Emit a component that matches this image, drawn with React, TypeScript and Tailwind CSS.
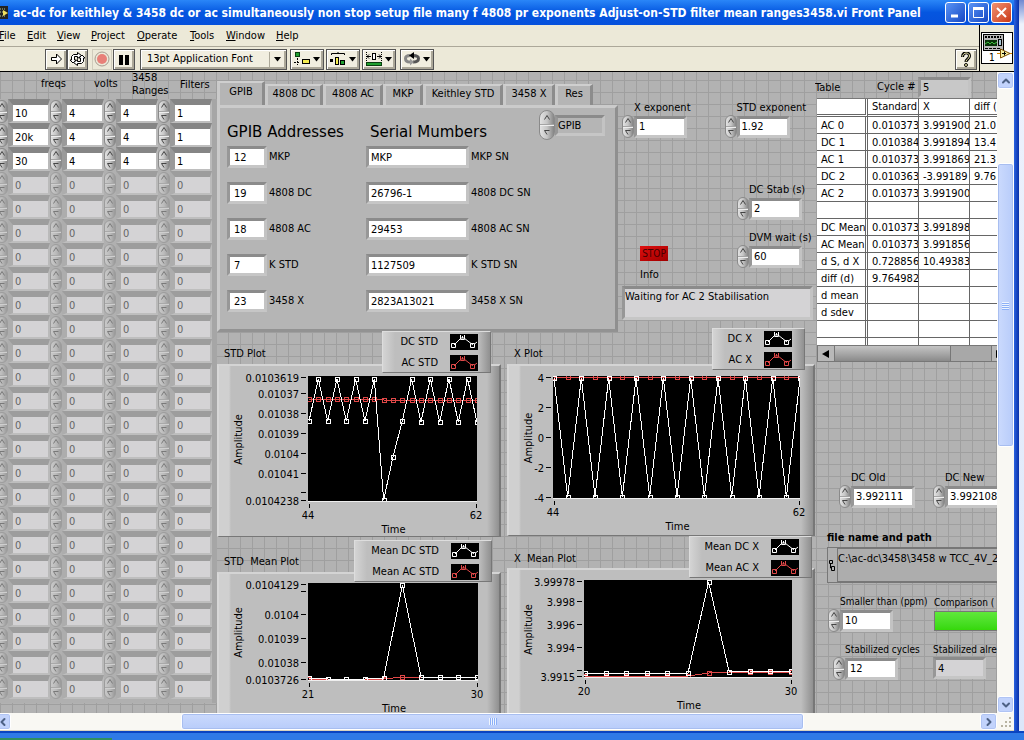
import { useState } from "react";
import clsx from "clsx";
import { ChevronDown, ChevronLeft, ChevronRight, ChevronUp } from "lucide-react";

const TITLE =
  "ac-dc for keithley & 3458 dc or ac simultaneously non stop setup file many f 4808 pr exponents Adjust-on-STD filter mean ranges3458.vi Front Panel";

const MENUS = [
  { name: "File", width: "w-[28px]" },
  { name: "Edit", width: "w-[30px]" },
  { name: "View", width: "w-[34px]" },
  { name: "Project", width: "w-[46px]" },
  { name: "Operate", width: "w-[53px]" },
  { name: "Tools", width: "w-[36px]" },
  { name: "Window", width: "w-[50px]" },
  { name: "Help", width: "w-[30px]" },
];

const TABS = [
  { name: "GPIB", width: "w-[48px]" },
  { name: "4808 DC", width: "w-[58px]" },
  { name: "4808 AC", width: "w-[60px]" },
  { name: "MKP", width: "w-[40px]" },
  { name: "Keithley STD", width: "w-[80px]" },
  { name: "3458 X", width: "w-[52px]" },
  { name: "Res", width: "w-[38px]" },
];

const DEVICES = [
  { name: "MKP", address: "12", serial: "MKP" },
  { name: "4808 DC", address: "19", serial: "26796-1" },
  { name: "4808 AC", address: "18", serial: "29453" },
  { name: "K STD", address: "7", serial: "1127509" },
  { name: "3458 X", address: "23", serial: "2823A13021" },
];

const ARRAY_COLUMNS = ["freqs", "volts", "3458 Ranges", "Filters"];

const ARRAY_ROWS: string[][] = [
  ["10", "4", "4", "1"],
  ["20k", "4", "4", "1"],
  ["30", "4", "4", "1"],
  ...Array.from({ length: 22 }, () => ["0", "0", "0", "0"]),
];

const TABLE_ROWS = [
  ["AC 0", "0.010373", "3.991900", "21.0"],
  ["DC 1", "0.010384", "3.991894", "13.4"],
  ["AC 1", "0.010373", "3.991869", "21.3"],
  ["DC 2", "0.010363", "-3.99189", "9.76"],
  ["AC 2", "0.010373", "3.991900", ""],
  ["", "", "", ""],
  ["DC Mean", "0.010373", "3.991898", ""],
  ["AC Mean", "0.010373", "3.991856", ""],
  ["d S, d X", "0.728856", "10.49383", ""],
  ["diff (d)", "9.764982", "", ""],
  ["d mean", "", "", ""],
  ["d sdev", "", "", ""],
  ["", "", "", ""],
  ["", "", "", ""],
];

/* ---------- small controls ---------- */

function Spinner({ label, dim, large }: { label: string; dim?: boolean; large?: boolean }) {
  return (
    <span
      className={clsx(
        "flex shrink-0 flex-col items-center overflow-hidden rounded-full border border-[#8a8a8a] bg-linear-to-r from-[#e2e2e2] via-[#c6c6c6] to-[#858585]",
        large ? "h-[30px] w-4" : "h-[23px] w-3",
        dim && "opacity-50"
      )}
    >
      <button aria-label={`Increase ${label}`} className="flex w-full flex-1 items-center justify-center border-b border-[#a4a4a4]">
        <svg width="6" height="5" viewBox="0 0 6 5">
          <path d="M0.5 4.5L3 0.5L5.5 4.5" fill="none" stroke="#444" />
        </svg>
      </button>
      <button aria-label={`Decrease ${label}`} className="flex w-full flex-1 items-center justify-center border-t border-[#eee]">
        <svg width="6" height="5" viewBox="0 0 6 5">
          <path d="M5.5 0.5H0.5L3 4.5" fill="none" stroke="#444" />
        </svg>
      </button>
    </span>
  );
}

const sunken = "border-3 border-t-[#8b8b8b] border-l-[#979797] border-r-[#c3c3c3] border-b-[#c6c6c6]";

interface NumericProps {
  id: string;
  label: string;
  value: string;
  width?: string;
  indicator?: boolean;
  small?: boolean;
}

function Numeric({ id, label, value, width = "w-[53px]", indicator, small }: NumericProps) {
  return (
    <div className="flex flex-col">
      <label
        htmlFor={id}
        className={clsx("h-[14px] leading-[14px] whitespace-nowrap", !indicator && "pl-3", small && "text-[10px]")}
      >
        {label}
      </label>
      <div className="flex items-center">
        {!indicator && <Spinner label={label} />}
        <input
          id={id}
          defaultValue={value}
          readOnly={indicator}
          className={clsx(sunken, width, "h-[22px] pl-0.5 outline-none", indicator ? "bg-[#d4d3d5]" : "bg-white")}
        />
      </div>
    </div>
  );
}

/* ---------- title bar, menus, toolbar ---------- */

function TitleBar() {
  const frame = "flex size-[21px] items-center justify-center rounded-[3px] border border-white";
  return (
    <header className="flex h-[25px] shrink-0 items-center overflow-hidden bg-linear-to-b from-[#2a86f8] via-[#0556e0] to-[#0650dc]">
      <svg width="9" height="14" viewBox="0 0 9 14" className="shrink-0">
        <rect width="8" height="13" fill="#222" />
        <path d="M0 3H6M0 6H3M0 10H5" stroke="#b8c890" strokeDasharray="1 1" />
        <path d="M3 4L8 7L3 10Z" fill="#f0e060" />
      </svg>
      <h1 className="min-w-0 flex-1 overflow-hidden pl-1 text-[12px] font-bold whitespace-nowrap text-white">
        {TITLE}
      </h1>
      <div className="flex shrink-0 gap-0.5 pr-0.5">
        <button aria-label="Minimize" className={clsx(frame, "bg-linear-to-br from-[#5a93f5] to-[#1747c4]")}>
          <svg width="13" height="13"><path d="M2 10H9" stroke="white" strokeWidth="3" /></svg>
        </button>
        <button aria-label="Maximize" className={clsx(frame, "bg-linear-to-br from-[#5a93f5] to-[#1747c4]")}>
          <svg width="13" height="13">
            <path d="M1.5 2V11.5H11.5V2" fill="none" stroke="white" />
            <path d="M1 2.5H12" stroke="white" strokeWidth="3" />
          </svg>
        </button>
        <button aria-label="Close" className={clsx(frame, "bg-linear-to-br from-[#f09070] to-[#c83410]")}>
          <svg width="13" height="13"><path d="M2 2L11 11M11 2L2 11" stroke="white" strokeWidth="2" /></svg>
        </button>
      </div>
    </header>
  );
}

const toolButton =
  "flex h-[21px] items-center justify-center border border-[#555] bg-[#f1eee0] shadow-[inset_1px_1px_0_#fff,inset_-2px_-2px_0_#aca899]";

function DropArrow() {
  return (
    <svg width="9" height="5" viewBox="0 0 9 5" className="shrink-0">
      <path d="M1 0H8L4.5 4.5Z" fill="black" />
    </svg>
  );
}

function Toolbar() {
  return (
    <div className="flex h-[25px] items-center border-t border-[#aca899] pl-[45px]">
      <button aria-label="Run" className={clsx(toolButton, "w-[22px]")}>
        <svg width="13" height="12" viewBox="0 0 13 12">
          <path d="M1.5 4.5H6.5V1L11.5 6L6.5 11V7.5H1.5Z" fill="white" stroke="black" />
        </svg>
      </button>
      <button aria-label="Run continuously" className={clsx(toolButton, "w-[21px]")}>
        <svg width="17" height="14" viewBox="0 0 17 14">
          <path
            d="M2.500 8V4.500L4.500 2.500H8.500V0.500L12.500 3.500L8.500 6.500V4.500H5.500V8L7 8L4 11L1 8Z"
            fill="white"
            stroke="black"
          />
          <path
            d="M14.500 6V9.500L12.500 11.500H8.500V13.500L4.500 10.500L8.500 7.500V9.500H11.500V6L10 6L13 3L16 6Z"
            fill="white"
            stroke="black"
          />
        </svg>
      </button>
      <button aria-label="Abort" className="ml-1 flex h-[21px] w-[20px] items-center justify-center border border-[#d0ccbc]">
        <svg width="16" height="16" viewBox="0 0 16 16">
          <circle cx="8" cy="8" r="7" fill="none" stroke="#a89c90" />
          <circle cx="8" cy="8" r="5" fill="#e88078" />
        </svg>
      </button>
      <button aria-label="Pause" className={clsx(toolButton, "ml-px w-[22px]")}>
        <svg width="11" height="11" viewBox="0 0 11 11"><path d="M0 1H4V11H0ZM6 1H10V11H6Z" /></svg>
      </button>
      <div className="relative ml-[5px]">
        <select aria-label="Font" className={clsx(toolButton, "w-[147px] appearance-none pl-1.5 outline-none")}>
          <option>13pt Application Font</option>
        </select>
        <span className="pointer-events-none absolute inset-y-[3px] right-[3px] flex w-[15px] items-center justify-center border-l border-[#aca899]">
          <DropArrow />
        </span>
      </div>
      <button aria-label="Align objects" className={clsx(toolButton, "ml-[3px] w-[34px] gap-0.5")}>
        <svg width="16" height="14" viewBox="0 0 16 14">
          <rect x="1.500" y="0.500" width="4" height="4" fill="#20a030" stroke="#0a4010" />
          <path d="M3.500 6V13" stroke="black" strokeDasharray="2 1" />
          <path d="M0 10.500H6" stroke="black" strokeDasharray="2 1" />
          <rect x="8.500" y="7.500" width="7" height="4" fill="#f4ec50" stroke="black" />
        </svg>
        <DropArrow />
      </button>
      <button aria-label="Distribute objects" className={clsx(toolButton, "ml-0.5 w-[34px] gap-0.5")}>
        <svg width="16" height="14" viewBox="0 0 16 14">
          <path d="M1.500 3V1.500H14.500V3M8 1V0" fill="none" stroke="black" />
          <path d="M0 7H3V10H0Z" fill="black" />
          <rect x="5.500" y="5.500" width="3" height="7" fill="#f4ec50" stroke="black" />
          <rect x="10.500" y="8.500" width="4" height="4" fill="#20a030" stroke="black" />
        </svg>
        <DropArrow />
      </button>
      <button aria-label="Resize objects" className={clsx(toolButton, "ml-0.5 w-[34px] gap-0.5")}>
        <svg width="16" height="14" viewBox="0 0 16 14">
          <path d="M0.500 0V9M15.500 0V9" stroke="black" strokeDasharray="1 1" />
          <path d="M1 4.500H5M3 2.500L1 4.500L3 6.500M15 4.500H11M13 2.500L15 4.500L13 6.500" fill="none" stroke="black" />
          <rect x="6.500" y="1.500" width="3" height="6" fill="#fff" stroke="black" />
          <rect x="0.500" y="10.500" width="15" height="3" fill="#20a030" stroke="#0a4010" />
        </svg>
        <DropArrow />
      </button>
      <button aria-label="Reorder" className={clsx(toolButton, "ml-1 w-[34px] gap-0.5")}>
        <svg width="16" height="14" viewBox="0 0 16 14">
          <path d="M9 10C14 10 14.500 8 14.500 6.500C14.500 4 12 3.500 9 3.500" fill="none" stroke="#555" strokeWidth="3" />
          <path d="M6 3.500C2 3.500 1.500 5 1.500 6.500C1.500 9 3 10 6 10" fill="none" stroke="#888" strokeWidth="3" />
          <path d="M10 0V7L5 3.500Z" fill="black" />
          <path d="M6 6.500V13.500L10 10Z" fill="#999" />
        </svg>
        <DropArrow />
      </button>
      <button aria-label="Help" className={clsx(toolButton, "mr-0.5 ml-auto w-[22px]")}>
        <svg width="12" height="15" viewBox="0 0 12 15">
          <path d="M2.500 5C2.500 -0.500 9.500 -0.500 9.500 4C9.500 7 6 7 6 10" fill="none" stroke="black" strokeWidth="3" />
          <path d="M2.500 4.500C3 0 9.500 0 9.500 4C9.500 7 6 7 6 9.500" fill="none" stroke="#f4f0b0" />
          <circle cx="6" cy="13" r="1.500" fill="#f4f0b0" stroke="black" />
        </svg>
      </button>
    </div>
  );
}

function ViIcon() {
  return (
    <svg width="32" height="32" viewBox="0 0 32 32">
      <rect x="0.500" y="0.500" width="31" height="31" fill="white" stroke="black" />
      <rect x="2.500" y="2.500" width="20" height="16" fill="#b8b8b8" stroke="black" />
      <path d="M4 5H20" stroke="black" strokeWidth="2" strokeDasharray="2 1" />
      <rect x="4" y="8" width="12" height="6" fill="#083008" />
      <path d="M4 12L7 10L9 12L11 10L13 12L16 10" fill="none" stroke="#40c040" />
      <rect x="17.500" y="7.500" width="3" height="6" fill="#a8c8d8" stroke="black" />
      <path d="M4 16.500H19" stroke="black" strokeDasharray="3 1" />
      <path d="M16 21.500H20M28 21.500H31" stroke="#d08000" />
      <path d="M19.500 17V26L29 21.500Z" fill="#f8f0a0" stroke="#805000" />
      <path d="M21 21.500H25M23.500 19.500V23.500" stroke="black" />
      <text x="8" y="29" fontSize="10">1</text>
    </svg>
  );
}

/* ---------- left hand array ---------- */

function SetupArray() {
  return (
    <section className="w-[217px] shrink-0 overflow-hidden">
      <div className="flex h-[27px] w-[217px] items-end pb-0.5 leading-[13px]">
        <span className="w-[94px] pb-[7px] pl-[41px]">freqs</span>
        <span className="w-[38px] pb-[7px]">volts</span>
        <span className="w-[48px]">3458 Ranges</span>
        <span className="pb-1.5">Filters</span>
      </div>
      <div className="-ml-1 grid w-[221px] grid-cols-[repeat(4,54px)] border-r-5 border-[#a6a6a6] bg-[#b0b0b0] pb-1">
        {ARRAY_ROWS.map((row, r) =>
          row.map((value, c) => {
            const on = r < 3;
            return (
              <div key={`${r}-${c}`} className="flex h-6 items-end">
                <Spinner label={`${ARRAY_COLUMNS[c]} ${r}`} dim={!on} />
                <input
                  aria-label={`${ARRAY_COLUMNS[c]} ${r}`}
                  defaultValue={value}
                  className={clsx(
                    "h-6 w-[42px] border-t-6 border-r-2 border-b-2 border-l-5 border-r-[#bababa] border-b-[#bebebe] pl-0.5 outline-none",
                    on
                      ? "border-t-[#858585] border-l-[#9a9a9a] bg-white"
                      : "border-t-[#9d9d9d] border-l-[#adadad] bg-[#d4d3d5] text-[#666]"
                  )}
                />
              </div>
            );
          })
        )}
      </div>
    </section>
  );
}

/* ---------- tab control ---------- */

function GpibTabs() {
  const [active, setActive] = useState(0);
  return (
    <div className="w-[401px] shrink-0 pt-[9px]">
      <div role="tablist" className="flex h-6 items-end">
        {TABS.map((tab, i) => (
          <button
            key={tab.name}
            role="tab"
            aria-selected={i === active}
            onClick={() => setActive(i)}
            className={clsx(
              tab.width,
              "shrink-0 border-t-2 border-r-3 border-l-3 border-t-[#cfcfcf] border-r-[#8c8c8c] border-l-[#cacaca] bg-[#b5b5b5] whitespace-nowrap",
              i === active ? "h-6 pb-1" : "h-[21px] pb-[3px]"
            )}
          >
            {tab.name}
          </button>
        ))}
      </div>
      <div
        role="tabpanel"
        className="h-[227px] border-3 border-t-[#cbcbcb] border-r-[#8f8f8f] border-b-[#929292] border-l-[#cbcbcb] bg-[#b5b5b5] pl-[7px]"
      >
        <div className="flex h-[31px] items-start font-['DejaVu_Sans'] text-[15px]">
          <h2 className="w-[143px] pt-[14px] leading-5">GPIB Addresses</h2>
          <h2 className="pt-[14px] leading-5">Serial Mumbers</h2>
          <div className="mt-0.5 mr-2.5 ml-auto flex items-center font-['DejaVu_Sans_Condensed'] text-[11px]">
            <Spinner label="page" large />
            <output className={clsx(sunken, "h-[21px] w-[50px] bg-[#b5b5b5] leading-4")}>GPIB</output>
          </div>
        </div>
        {DEVICES.map((d, i) => (
          <div key={d.name} className="flex h-9 items-center">
            <div className="flex w-[139px] items-center gap-0.5">
              <input id={`addr-${i}`} defaultValue={d.address} className={clsx(sunken, "h-[22px] w-10 bg-white pl-1 outline-none")} />
              <label htmlFor={`addr-${i}`}>{d.name}</label>
            </div>
            <div className="flex items-center gap-0.5">
              <input id={`sn-${i}`} defaultValue={d.serial} className={clsx(sunken, "h-[22px] w-[103px] bg-white pl-0.5 outline-none")} />
              <label htmlFor={`sn-${i}`}>{d.name} SN</label>
            </div>
          </div>
        ))}
      </div>
    </div>
  );
}

function RunControls() {
  return (
    <div className="flex min-w-0 flex-1 flex-col pt-[29px]">
      <div className="flex h-[82px] gap-[34px] pl-1">
        <Numeric id="x-exp" label="X exponent" value="1" />
        <Numeric id="std-exp" label="STD exponent" value="1.92" />
      </div>
      <div className="h-12 pl-[119px]">
        <Numeric id="dc-stab" label="DC Stab (s)" value="2" />
      </div>
      <div className="flex h-[55px]">
        <div className="w-[119px] shrink-0 pt-[15px] pl-[22px]">
          <button className="block h-[15px] w-[28px] bg-linear-to-br from-[#e01010] to-[#a00000] text-center text-[10px] leading-[14px] text-[#400]">
            STOP
          </button>
          <label htmlFor="info" className="block pt-[7px]">Info</label>
        </div>
        <Numeric id="dvm-wait" label="DVM wait (s)" value="60" />
      </div>
      <textarea
        id="info"
        readOnly
        defaultValue="Waiting for AC 2 Stabilisation"
        className={clsx(sunken, "mr-0.5 ml-1 block h-[34px] resize-none overflow-hidden bg-[#d4d3d5] pt-px outline-none")}
      />
    </div>
  );
}

/* ---------- plots ---------- */

type Point = [number, number];

interface PlotProps {
  title: string;
  legend: string[];
  header: string;
  legendClass: string;
  panelHeight: number;
  area: { x: number; y: number; w: number; h: number };
  ticks: [number, string][];
  range: [string, string];
  dc: Point[];
  ac: Point[];
}

function LegendKey({ color }: { color: string }) {
  return (
    <svg width="28" height="16" viewBox="0 0 28 16">
      <rect width="28" height="16" fill="black" />
      <path d="M4 11L11 4H14L23 11" fill="none" stroke={color} />
      <path d="M1.500 9.500H5.500V13.500H1.500ZM10.500 1V5.500H14.500V1M12.500 2V4M20.500 9.500H24.500V13.500H20.500ZM24.500 10L27 8" fill="none" stroke={color} />
    </svg>
  );
}

function Series({ points, color }: { points: Point[]; color: string }) {
  return (
    <g fill="none" stroke={color} shapeRendering="crispEdges">
      <polyline points={points.map((p) => p.join(",")).join(" ")} />
      {points.map(([x, y]) => (
        <rect key={x} x={Math.round(x) - 2} y={Math.round(y) - 2} width="4" height="4" />
      ))}
    </g>
  );
}

function Plot({ title, legend, header, legendClass, panelHeight, area, ticks, range, dc, ac }: PlotProps) {
  const clip = title.replace(/\s+/g, "-");
  const bottom = area.y + area.h;
  return (
    <figure className="relative">
      <figcaption className={clsx("pl-[7px] whitespace-pre", header)}>{title}</figcaption>
      <div className="overflow-hidden border-t-2 border-r-2 border-b border-l-2 border-t-[#d4d4d4] border-r-[#777] border-b-[#777] border-l-[#d8d8d8] bg-[linear-gradient(to_right,#d0d0d0_10px,#bebebe_12px,#bebebe_calc(100%-12px),#909090)]">
        <svg width="100%" height={panelHeight - 3} className="block overflow-visible text-[11px]">
          <g transform="translate(-2 -2)">
            <clipPath id={clip}>
              <rect x={area.x} y={area.y} width={area.w} height={area.h} />
            </clipPath>
            <rect x={area.x} y={area.y} width={area.w} height={area.h} fill="black" />
            <g clipPath={`url(#${clip})`}>
              <Series points={ac} color="#e04848" />
              <Series points={dc} color="white" />
            </g>
            <path d={`M${area.x} ${bottom + 0.5}H${area.x + area.w}`} stroke="#eee" />
            {ticks.map(([y, text]) => (
              <g key={y}>
                <path d={`M${area.x - 7} ${y + 0.5}h5`} stroke="black" />
                <text x={area.x - 9} y={y + 5} textAnchor="end">{text}</text>
              </g>
            ))}
            <path d={`M${area.x + 1.5} ${bottom + 3}v4M${area.x + area.w - 0.5} ${bottom + 3}v4`} stroke="black" />
            <text x={area.x} y={bottom + 18} textAnchor="middle">{range[0]}</text>
            <text x={area.x + area.w - 1} y={bottom + 18} textAnchor="middle">{range[1]}</text>
            <text x={area.x + area.w / 2 + 1} y={bottom + 32} textAnchor="middle">Time</text>
            <text transform={`translate(25 ${area.y + area.h / 2 + 1}) rotate(-90)`} textAnchor="middle">Amplitude</text>
          </g>
        </svg>
      </div>
      <div
        className={clsx(
          "absolute flex h-[42px] flex-col justify-center gap-[5px] border border-t-[#ddd] border-r-[#777] border-b-[#777] border-l-[#ddd] bg-[linear-gradient(to_right,#d4d4d4,#bebebe_12px,#bebebe_calc(100%-12px),#909090)] pr-3",
          legendClass
        )}
      >
        {legend.map((name, i) => (
          <div key={name} className="flex h-4 items-center justify-end gap-3 whitespace-nowrap">
            {name}
            <LegendKey color={i === 0 ? "white" : "#e04848"} />
          </div>
        ))}
      </div>
    </figure>
  );
}

const spread = (x0: number, step: number, ys: number[]): Point[] => ys.map((y, i) => [x0 + i * step, y]);

const stdDc = spread(92, 9.33, [57, 15, 57, 15, 57, 15, 57, 15, 136, 93, 57, 15, 58, 15, 58, 15, 58, 15, 58]);
const stdAc = spread(92, 9.33, Array.from({ length: 19 }, (_, i) => (i < 8 ? 35 : 36)));
const xDc = spread(47, 13.67, Array.from({ length: 19 }, (_, i) => (i % 2 ? 133 : 14)));
const xAc = spread(47, 13.67, Array.from({ length: 19 }, () => 13));
const stdMeanDc = spread(92, 18.67, [106, 107, 107, 107, 106, 13, 105, 105, 105, 105]);
const stdMeanAc = spread(92, 18.67, [107, 107, 107, 107, 107, 105, 105, 105, 105, 105]);
const xMeanDc = spread(78, 20.6, [105, 105, 105, 105, 105, 105, 14, 104, 103, 103, 103]);
const xMeanAc = spread(78, 20.6, [108, 108, 108, 108, 108, 108, 105, 104, 104, 104, 104]);

function Plots() {
  return (
    <div className="flex gap-[6px]">
      <div className="w-[284px]">
        <Plot
          title="STD Plot"
          legend={["DC STD", "AC STD"]}
          header="h-[33px] pt-4"
          legendClass="top-0 right-[10px] w-[109px]"
          panelHeight={173}
          area={{ x: 91, y: 12, w: 169, h: 125 }}
          ticks={[[13, "0.0103619"], [29, "0.01037"], [49, "0.01038"], [69, "0.01039"], [89, "0.0104"], [109, "0.01041"], [128, ""], [136, "0.0104238"]]}
          range={["44", "62"]}
          dc={stdDc}
          ac={stdAc}
        />
        <Plot
          title="STD  Mean Plot"
          legend={["Mean DC STD", "Mean AC STD"]}
          header="h-[35px] pt-[18px]"
          legendClass="top-[3px] right-[9px] w-[138px]"
          panelHeight={173}
          area={{ x: 91, y: 11, w: 170, h: 97 }}
          ticks={[[12, "0.0104129"], [19, ""], [42, "0.0104"], [66, "0.01039"], [90, "0.01038"], [107, "0.0103726"]]}
          range={["21", "30"]}
          dc={stdMeanDc}
          ac={stdMeanAc}
        />
      </div>
      <div className="flex-1">
        <Plot
          title="X Plot"
          legend={["DC X", "AC X"]}
          header="h-[33px] pt-4"
          legendClass="-top-[3px] right-[10px] w-[93px]"
          panelHeight={172}
          area={{ x: 46, y: 12, w: 247, h: 122 }}
          ticks={[[13, "4"], [43, "2"], [73, "0"], [103, "-2"], [133, "-4"]]}
          range={["44", "62"]}
          dc={xDc}
          ac={xAc}
        />
        <Plot
          title="X  Mean Plot"
          legend={["Mean DC X", "Mean AC X"]}
          header="h-[32px] pt-4"
          legendClass="top-0 right-[3px] w-[123px]"
          panelHeight={173}
          area={{ x: 77, y: 12, w: 208, h: 97 }}
          ticks={[[13, "3.99978"], [33, "3.998"], [56, "3.996"], [79, "3.994"], [102, ""], [108, "3.9915"]]}
          range={["20", "30"]}
          dc={xMeanDc}
          ac={xMeanAc}
        />
      </div>
    </div>
  );
}

/* ---------- results column ---------- */

function ResultsTable() {
  const line = "border-[#666] overflow-hidden whitespace-nowrap text-left font-normal";
  return (
    <div className="pl-0.5">
      <div className="h-[247px] overflow-hidden border-t border-[#777]">
        <table className="w-[205px] table-fixed border-separate border-spacing-0 bg-white leading-[15px]">
          <colgroup>
            <col className="w-[51px]" />
            <col className="w-[51px]" />
            <col className="w-[51px]" />
            <col className="w-[52px]" />
          </colgroup>
          <thead>
            <tr className="h-[18px]">
              {["", "Standard", "X", "diff ("].map((h, i) => (
                <th key={i} className={clsx(line, "border-b-3 border-double pl-1", i === 0 ? "border-r-3" : "border-r")}>{h}</th>
              ))}
            </tr>
          </thead>
          <tbody>
            {TABLE_ROWS.map((row, r) => (
              <tr key={r} className="h-[17px]">
                {row.map((cell, i) => (
                  <td key={i} className={clsx(line, "h-[17px] border-b pl-1", i === 0 ? "border-r-3 [border-right-style:double]" : "border-r")}>{cell}</td>
                ))}
              </tr>
            ))}
          </tbody>
        </table>
      </div>
      <div className="flex h-[17px] w-[190px] border border-[#777] bg-[#a8a8a8]">
        <button aria-label="Scroll table left" className="flex w-4 items-center justify-center bg-[#b8b8b8]">
          <svg width="8" height="8"><path d="M7 0V8L0 4Z" /></svg>
        </button>
        <div className="w-[117px] border-r border-l border-[#777] bg-linear-to-b from-[#c4c4c4] via-[#a8a8a8] to-[#8a8a8a]" />
        <div className="w-10" />
        <button aria-label="Scroll table right" className="flex flex-1 items-center border-l border-[#777] bg-[#b8b8b8] pl-1">
          <svg width="8" height="8"><path d="M0 0V8L7 4Z" /></svg>
        </button>
      </div>
    </div>
  );
}

function Results() {
  return (
    <section className="min-w-0 flex-1 overflow-hidden">
      <div className="flex h-[26px] items-center pt-1">
        <span className="w-[62px] shrink-0 pt-px">Table</span>
        <label htmlFor="cycle" className="w-[41px] shrink-0 whitespace-nowrap">Cycle #</label>
        <input id="cycle" readOnly defaultValue="5" className={clsx(sunken, "h-[21px] w-[53px] bg-[#c8c8c8] pl-0.5 outline-none")} />
      </div>
      <ResultsTable />
      <div className="box-content flex h-[60px] w-[210px] gap-[18px] pt-[109px] pl-6">
        <Numeric id="dc-old" label="DC Old" value="3.992111" width="w-[64px]" />
        <Numeric id="dc-new" label="DC New" value="3.992108" width="w-[64px]" />
      </div>
      <label htmlFor="path" className="block pl-3 font-bold whitespace-nowrap">file name and path</label>
      <div className="mt-0.5 ml-3 flex h-9 w-[210px] border border-[#777] bg-[#b0b0b0]">
        <svg width="9" height="34" viewBox="0 0 9 34" className="shrink-0">
          <path d="M1.500 12.500H4.500V15.500H1.500ZM3.500 18.500H6.500V22.500H3.500ZM2.500 16V20H4" fill="none" stroke="black" />
        </svg>
        <textarea
          id="path"
          readOnly
          wrap="off"
          defaultValue="C:\ac-dc\3458\3458 w TCC_4V_2"
          className="block h-full flex-1 resize-none overflow-hidden border border-[#777] bg-[#adadad] pt-[3px] outline-none"
        />
      </div>
      <div className="flex h-[60px] pt-3 pl-[13px]">
        <div className="w-[106px] shrink-0">
          <Numeric id="smaller" label="Smaller than (ppm)" value="10" small />
        </div>
        <div className="whitespace-nowrap">
          <p className="text-[10px] leading-4">Comparison (</p>
          <div className="h-5 w-[90px] border border-[#777] bg-linear-to-b from-[#5fe83a] to-[#35d808]" />
        </div>
      </div>
      <div className="flex h-12 pl-[18px]">
        <div className="w-[100px] shrink-0">
          <Numeric id="stab" label="Stabilized cycles" value="12" small />
        </div>
        <Numeric id="stab-already" label="Stabilized alre" value="4" indicator small />
      </div>
    </section>
  );
}

/* ---------- window scroll bars ---------- */

const scrollButton =
  "flex size-[17px] shrink-0 items-center justify-center rounded-[3px] border border-white bg-[#c2d3fc] text-[#4d6185] shadow-[inset_0_0_0_1px_#b0c4f4]";

function VerticalScroll() {
  return (
    <div className="flex w-[17px] shrink-0 flex-col bg-[#f9f8f3]">
      <button aria-label="Scroll up" className={scrollButton}><ChevronUp size={12} strokeWidth={4} /></button>
      <div className="mt-[74px] flex h-[284px] flex-col items-center justify-center gap-px rounded-[3px] border border-white bg-linear-to-r from-[#cbdafd] to-[#b8ccfa] shadow-[inset_0_0_0_1px_#a8bef0]">
        {[0, 1, 2, 3].map((i) => (
          <span key={i} className="h-px w-[7px] bg-[#eef4fe] shadow-[0_1px_0_#8cb0f8]" />
        ))}
      </div>
      <button aria-label="Scroll down" className={clsx(scrollButton, "mt-auto")}><ChevronDown size={12} strokeWidth={4} /></button>
    </div>
  );
}

function HorizontalScroll() {
  return (
    <div className="flex h-[18px] shrink-0 overflow-hidden border-b border-[#d8d4c0] bg-[#f9f8f3]">
      <button aria-label="Scroll left" className={clsx(scrollButton, "-ml-[6px]")}><ChevronLeft size={12} strokeWidth={4} /></button>
      <div className="mr-[176px] ml-[170px] flex flex-1 items-center justify-center gap-px rounded-[3px] border border-white bg-linear-to-b from-[#cbdafd] to-[#b8ccfa] shadow-[inset_0_0_0_1px_#a8bef0]">
        {[0, 1, 2, 3].map((i) => (
          <span key={i} className="h-[7px] w-px bg-[#eef4fe] shadow-[1px_0_0_#8cb0f8]" />
        ))}
      </div>
      <button aria-label="Scroll right" className={scrollButton}><ChevronRight size={12} strokeWidth={4} /></button>
      <svg width="17" height="17" className="shrink-0">
        <path d="M12 5h2M8 9h2M12 9h2M4 13h2M8 13h2M12 13h2" stroke="#b8b4a2" strokeWidth="2" />
      </svg>
    </div>
  );
}

export default function App() {
  return (
    <div className="flex h-screen flex-col overflow-hidden bg-[#2f7ae6] font-['DejaVu_Sans_Condensed',sans-serif] text-[11px] leading-[14px] text-black">
      <div className="flex min-h-0 flex-1">
        <div className="flex min-w-0 flex-1 flex-col">
          <TitleBar />
          <div className="flex shrink-0 border-b border-black bg-[#ece9d8]">
            <div className="min-w-0 flex-1">
              <nav className="-ml-px flex h-[21px] items-center">
                {MENUS.map((m) => (
                  <button key={m.name} className={clsx("text-left", m.width)}>
                    <span className="underline">{m.name[0]}</span>
                    {m.name.slice(1)}
                  </button>
                ))}
              </nav>
              <Toolbar />
            </div>
            <div className="flex w-[35px] items-center justify-center border-l border-black">
              <ViIcon />
            </div>
          </div>
          <div className="flex min-h-0 flex-1">
            <main className="flex min-w-0 flex-1 overflow-hidden bg-[#b2b2b2] bg-[linear-gradient(to_right,#9f9f9f_1px,transparent_1px),linear-gradient(to_bottom,#9f9f9f_1px,transparent_1px)] bg-[size:12px_12px] bg-[position:0px_8px]">
              <SetupArray />
              <section className="w-[598px] shrink-0">
                <div className="flex h-[259px]">
                  <GpibTabs />
                  <RunControls />
                </div>
                <Plots />
              </section>
              <Results />
            </main>
            <VerticalScroll />
          </div>
          <HorizontalScroll />
        </div>
        <div className="w-[5px] shrink-0 bg-linear-to-r from-[#2a62e0] to-[#0a30a8]" />
        <div className="w-[5px] shrink-0 bg-linear-to-b from-[#7088d0] via-[#eef2fc] via-[24px] to-[#dce6fa]" />
      </div>
      <div className="flex h-[9px] shrink-0 items-end border-t-2 border-[#0a44c0]">
        <div className="h-0.5 w-28 bg-[#2f9060]" />
      </div>
    </div>
  );
}
